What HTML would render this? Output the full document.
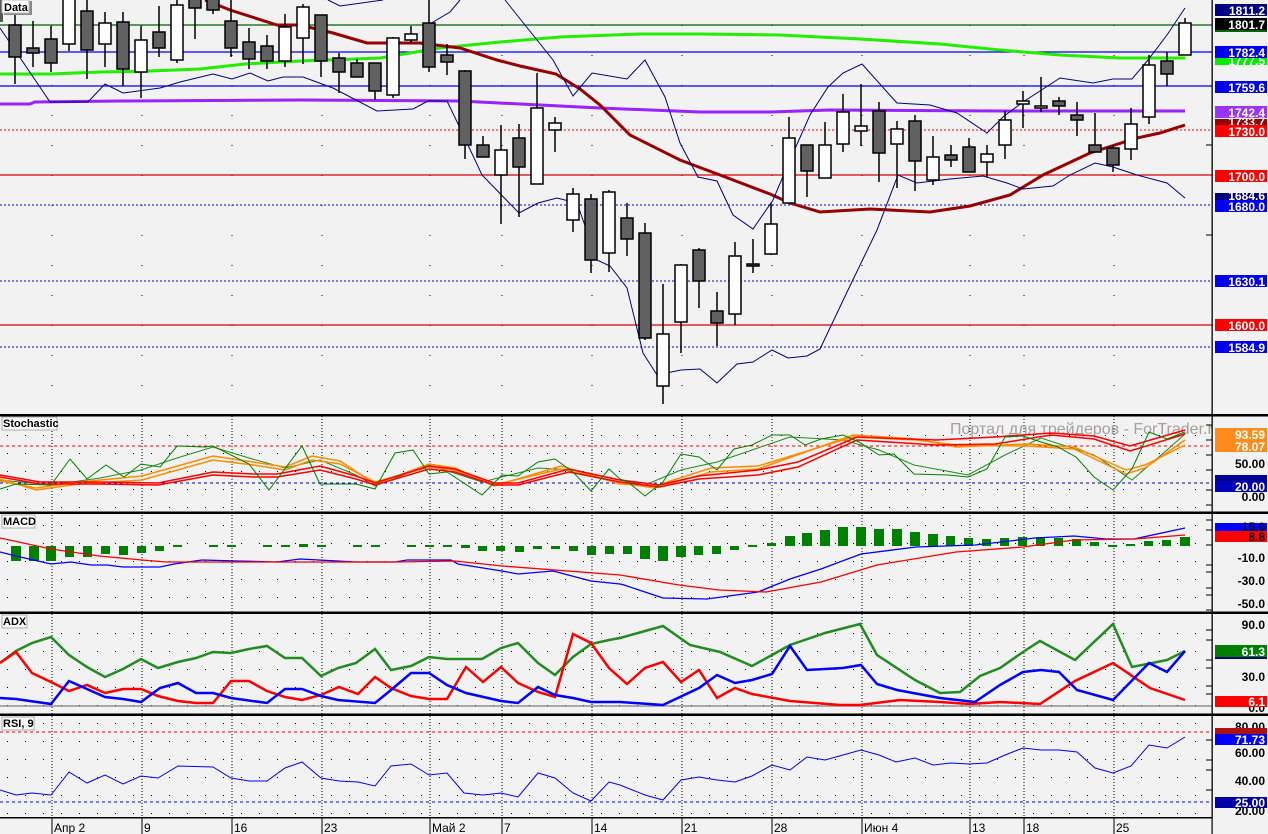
<!DOCTYPE html>
<html><head><meta charset="utf-8"><style>
html,body{margin:0;padding:0;background:#f2f2f2;}
svg{display:block;font-family:"Liberation Sans","DejaVu Sans",sans-serif;}
.lb{font-weight:bold;font-size:12px;text-anchor:end;}
.tt{font-weight:bold;font-size:11px;}
</style></head><body>
<svg width="1268" height="834" viewBox="0 0 1268 834" xmlns="http://www.w3.org/2000/svg">
<defs>
<pattern id="dg" x="7" y="3" width="18" height="18" patternUnits="userSpaceOnUse"><rect x="0" y="0" width="1" height="1" fill="#000"/></pattern>
<clipPath id="cp"><rect x="0" y="0" width="1212" height="818"/></clipPath>
</defs>
<rect x="0" y="0" width="1268" height="834" fill="#f2f2f2"/>
<!-- sub panel dot grids -->
<rect x="0" y="420" width="1210" height="90" fill="url(#dg)"/>
<rect x="0" y="517" width="1210" height="93" fill="url(#dg)"/>
<rect x="0" y="617" width="1210" height="94" fill="url(#dg)"/>
<rect x="0" y="719" width="1210" height="97" fill="url(#dg)"/>
<g clip-path="url(#cp)">
<!-- vertical date gridlines -->
<g stroke="#000" stroke-width="1" stroke-dasharray="1 29">
<path d="M52 25V415M142 25V415M232 25V415M322 25V415M430 25V415M502 25V415M592 25V415M682 25V415M772 25V415M862 25V415M970 25V415M1024 25V415M1114 25V415"/>
</g>
<g stroke="#000" stroke-width="1" stroke-dasharray="1 2">
<path d="M52 416V818M142 416V818M232 416V818M322 416V818M430 416V818M502 416V818M592 416V818M682 416V818M772 416V818M862 416V818M970 416V818M1024 416V818M1114 416V818"/>
</g>
<!-- horizontal levels main -->
<line x1="0" y1="25" x2="1212" y2="25" stroke="#006400" stroke-width="1.3"/>
<line x1="0" y1="52" x2="1212" y2="52" stroke="#0000ee" stroke-width="1.3"/>
<line x1="0" y1="86" x2="1212" y2="86" stroke="#0000ee" stroke-width="1.3"/>
<line x1="0" y1="130" x2="1212" y2="130" stroke="#ff0000" stroke-width="1" stroke-dasharray="2 2"/>
<line x1="0" y1="175" x2="1212" y2="175" stroke="#dd0000" stroke-width="1.3"/>
<line x1="0" y1="205" x2="1212" y2="205" stroke="#0000cc" stroke-width="1" stroke-dasharray="2 2"/>
<line x1="0" y1="281" x2="1212" y2="281" stroke="#0000cc" stroke-width="1" stroke-dasharray="2 2"/>
<line x1="0" y1="325" x2="1212" y2="325" stroke="#dd0000" stroke-width="1.3"/>
<line x1="0" y1="347" x2="1212" y2="347" stroke="#0000cc" stroke-width="1" stroke-dasharray="2 2"/>
<!-- MAs -->
<polyline fill="none" stroke="#22ee00" stroke-width="3" points="0,74 50,74 100,72 150,71 200,69 245,64 300,61 380,58 440,48 500,42 560,37 640,34 700,34 780,35 860,39 940,44 1000,50 1060,55 1120,58 1185,58"/>
<polyline fill="none" stroke="#9922ff" stroke-width="3" points="0,104 30,104 35,102 120,101 300,100 460,101 540,105 600,108 700,112 770,112 830,110 1000,111 1185,111"/>
<polyline fill="none" stroke="#990000" stroke-width="3" points="205,0 230,10 277,25 300,25 333,33 367,43 420,43 460,48 497,60 520,66 556,74 580,89 600,105 630,135 680,160 720,175 770,194 790,203 820,212 870,209 930,212 970,206 1010,195 1043,175 1090,153 1137,138 1160,133 1185,125"/>
<!-- Bollinger -->
<polyline fill="none" stroke="#000080" stroke-width="1" points="328,0 340,6 383,0"/>
<polyline fill="none" stroke="#000080" stroke-width="1" points="428,25 450,12 460,0"/>
<polyline fill="none" stroke="#000080" stroke-width="1" points="505,0 525,25 553,60 573,96 592,73 627,79 645,60 665,97 680,143 698,177 717,181 733,215 753,229 773,200 790,160 810,115 828,87 843,73 862,64 897,103 930,105 957,113 987,133 1003,117 1023,102 1060,78 1093,83 1113,79 1132,79 1148,60 1167,35 1185,8"/>
<polyline fill="none" stroke="#000080" stroke-width="1" points="0,28 50,102 88,102 105,84 123,93 160,88 180,82 213,74 232,79 250,73 268,81 283,77 303,77 333,88 377,111 413,109 428,101 447,101 460,128 482,175 519,213 538,203 557,198 577,203 597,260 610,266 627,288 643,353 657,375 681,370 700,369 717,383 737,364 753,362 772,350 788,358 807,356 820,349 848,290 877,230 898,175 917,183 950,179 983,176 1007,183 1023,189 1053,186 1070,175 1095,163 1113,167 1137,175 1167,183 1185,198"/>
<!-- candles -->
<path stroke="#000" stroke-width="1.5" fill="none" d="M15 15V84M33 21V67M51 26V72M69 0V51M87 0V79M105 12V67M123 12V86M141 26V98M159 6V57M177 0V63M195 0V39M213 0V14M231 0V57M249 28V69M267 35V69M285 14V67M303 4V64M321 15V77M339 53V93M357 59V77M375 63V100M393 37V98M411 26V43M429 0V72M447 44V75M465 70V159M483 136V157M501 125V224M519 124V217M537 73V184M555 117V152M573 188V232M591 194V273M609 190V272M627 203V256M645 223V340M663 284V404M681 264V353M699 248V308M717 292V346M735 242V325M753 239V273M771 203V255M789 117V203M807 145V197M825 122V178M843 94V152M861 84V146M879 102V182M897 121V188M915 115V191M933 136V185M951 145V167M969 138V172M987 145V177M1005 111V159M1023 91V128M1041 77V112M1059 97V115M1077 102V136M1095 113V152M1113 145V172M1131 108V160M1149 55V124M1167 52V86M1185 18V55"/>
<g stroke="#000" stroke-width="1.5" fill="#616161">
<rect x="9" y="25" width="12" height="32"/><rect x="27" y="48" width="12" height="5"/><rect x="45" y="39" width="12" height="24"/>
<rect x="81" y="11" width="12" height="39"/><rect x="117" y="22" width="12" height="47"/><rect x="153" y="32" width="12" height="16"/>
<rect x="189" y="-2" width="12" height="10"/><rect x="207" y="-2" width="12" height="12"/><rect x="225" y="21" width="12" height="27"/>
<rect x="243" y="42" width="12" height="17"/><rect x="261" y="46" width="12" height="15"/><rect x="315" y="15" width="12" height="46"/>
<rect x="333" y="58" width="12" height="14"/><rect x="351" y="63" width="12" height="14"/><rect x="369" y="63" width="12" height="28"/>
<rect x="423" y="23" width="12" height="44"/><rect x="441" y="55" width="12" height="7"/><rect x="459" y="71" width="12" height="74"/>
<rect x="477" y="145" width="12" height="12"/><rect x="513" y="138" width="12" height="29"/><rect x="585" y="199" width="12" height="61"/>
<rect x="621" y="218" width="12" height="21"/><rect x="639" y="233" width="12" height="105"/><rect x="693" y="250" width="12" height="31"/>
<rect x="711" y="311" width="12" height="12"/><rect x="747" y="264" width="12" height="2"/><rect x="801" y="145" width="12" height="26"/>
<rect x="873" y="111" width="12" height="42"/><rect x="909" y="121" width="12" height="40"/><rect x="945" y="155" width="12" height="5"/>
<rect x="963" y="147" width="12" height="25"/><rect x="1053" y="101" width="12" height="5"/><rect x="1071" y="115" width="12" height="5"/>
<rect x="1089" y="145" width="12" height="7"/><rect x="1107" y="148" width="12" height="17"/><rect x="1161" y="61" width="12" height="13"/>
</g>
<g stroke="#000" stroke-width="1.5" fill="#fff">
<rect x="63" y="-2" width="12" height="46"/><rect x="99" y="23" width="12" height="21"/><rect x="135" y="40" width="12" height="32"/>
<rect x="171" y="5" width="12" height="55"/><rect x="279" y="27" width="12" height="34"/><rect x="297" y="7" width="12" height="31"/>
<rect x="387" y="38" width="12" height="57"/><rect x="405" y="34" width="12" height="6"/><rect x="495" y="150" width="12" height="25"/>
<rect x="531" y="108" width="12" height="76"/><rect x="549" y="123" width="12" height="7"/><rect x="567" y="194" width="12" height="26"/>
<rect x="603" y="192" width="12" height="61"/><rect x="657" y="334" width="12" height="52"/><rect x="675" y="265" width="12" height="57"/>
<rect x="729" y="256" width="12" height="58"/><rect x="765" y="224" width="12" height="30"/><rect x="783" y="138" width="12" height="65"/>
<rect x="819" y="145" width="12" height="33"/><rect x="837" y="112" width="12" height="32"/><rect x="855" y="126" width="12" height="5"/>
<rect x="891" y="129" width="12" height="15"/><rect x="927" y="157" width="12" height="23"/><rect x="981" y="154" width="12" height="8"/>
<rect x="999" y="120" width="12" height="25"/><rect x="1017" y="101" width="12" height="3"/><rect x="1035" y="106" width="12" height="2"/>
<rect x="1125" y="124" width="12" height="25"/><rect x="1143" y="65" width="12" height="52"/><rect x="1179" y="23" width="12" height="32"/>
</g>

<!-- Stochastic -->
<text x="950" y="434" font-size="16" fill="#a89e9e">Портал для трейдеров - ForTrader.ru</text>
<line x1="0" y1="446" x2="1212" y2="446" stroke="#ff0000" stroke-dasharray="3 3"/>
<line x1="0" y1="483" x2="1212" y2="483" stroke="#0000aa" stroke-dasharray="3 3"/>
<polyline fill="none" stroke="#228b22" stroke-width="1" points="0,480 51,485 100,478 141,470 177,458 213,447 249,458 285,468 320,460 356,475 375,486 429,465 482,482 538,468 573,470 609,478 645,485 681,470 717,462 752,450 790,437 843,440 879,450 914,465 968,475 1005,455 1041,438 1094,455 1132,480 1167,450 1185,434"/>
<polyline fill="none" stroke="#ff8c00" stroke-width="1.5" points="0,481 36,488 79,482 142,476 213,456 253,462 285,467 312,456 340,461 375,484 429,464 455,468 494,486 561,466 620,484 655,486 711,468 758,466 853,437 916,440 956,445 1027,446 1074,449 1126,474 1145,468 1185,440"/>
<polyline fill="none" stroke="#ff8c00" stroke-width="1.5" points="0,479 36,490 79,484 142,480 213,460 253,465 285,470 312,460 340,464 375,482 429,467 455,470 494,485 561,469 620,483 655,488 711,472 758,469 853,435 916,439 956,447 1027,444 1074,447 1126,470 1145,465 1185,445"/>
<polyline fill="none" stroke="#ff0000" stroke-width="1.5" points="0,475 40,482 99,482 158,483 213,472 253,474 277,474 320,466 356,476 375,483 429,466 455,469 494,483 518,483 569,469 620,480 659,485 699,476 758,470 798,462 857,437 936,440 995,437 1051,433 1094,436 1130,446 1185,430"/>
<polyline fill="none" stroke="#ff0000" stroke-width="1.5" points="0,477 40,484 99,484 158,485 213,475 253,477 277,477 320,470 356,479 375,485 429,469 455,472 494,485 518,485 569,472 620,482 659,487 699,479 758,475 798,467 857,440 936,445 995,444 1051,435 1094,439 1130,451 1185,434"/>
<polyline fill="none" stroke="#008000" stroke-width="1" points="0,489 16,484 51,485 70,459 87,479 106,465 124,477 141,464 160,467 177,446 205,447 213,446 249,464 269,490 302,446 320,484 356,484 375,489 395,453 413,450 429,474 447,472 482,495 502,475 518,476 538,462 555,459 573,472 591,491 609,469 620,479 628,482 645,496 663,482 681,454 699,457 717,470 734,449 752,445 772,435 790,435 805,445 821,439 843,435 859,442 879,455 894,454 914,474 948,475 968,477 987,469 1005,437 1023,436 1041,442 1058,447 1076,457 1094,477 1113,490 1132,469 1149,432 1167,439 1185,432"/>

<!-- MACD -->
<g fill="#008000">
<rect x="11" y="546" width="10" height="15"/><rect x="29" y="546" width="10" height="15"/><rect x="46" y="546" width="10" height="15"/>
<rect x="65" y="546" width="9" height="11"/><rect x="83" y="546" width="9" height="11"/><rect x="101" y="546" width="9" height="8"/>
<rect x="119" y="546" width="9" height="9"/><rect x="137" y="546" width="9" height="7"/><rect x="155" y="546" width="9" height="5"/>
<rect x="173" y="545" width="9" height="2"/><rect x="209" y="545" width="9" height="2"/><rect x="227" y="545" width="9" height="2"/>
<rect x="263" y="545" width="9" height="2"/><rect x="281" y="545" width="9" height="2"/><rect x="299" y="544" width="9" height="3"/>
<rect x="317" y="545" width="9" height="2"/><rect x="353" y="545" width="9" height="2"/><rect x="371" y="545" width="9" height="2"/>
<rect x="407" y="545" width="9" height="2"/><rect x="425" y="545" width="9" height="2"/><rect x="443" y="545" width="9" height="2"/>
<rect x="461" y="545" width="9" height="3"/><rect x="478" y="546" width="9" height="5"/><rect x="496" y="546" width="9" height="5"/>
<rect x="515" y="546" width="9" height="6"/><rect x="533" y="546" width="9" height="3"/><rect x="551" y="546" width="9" height="3"/>
<rect x="569" y="546" width="9" height="5"/><rect x="587" y="546" width="9" height="9"/><rect x="605" y="546" width="9" height="8"/>
<rect x="623" y="546" width="9" height="8"/><rect x="640" y="546" width="10" height="13"/><rect x="658" y="546" width="10" height="15"/>
<rect x="676" y="546" width="10" height="11"/><rect x="694" y="546" width="9" height="9"/><rect x="712" y="546" width="9" height="8"/>
<rect x="730" y="546" width="9" height="4"/><rect x="748" y="545" width="9" height="2"/><rect x="767" y="543" width="9" height="3"/>
<rect x="785" y="536" width="10" height="10"/><rect x="802" y="533" width="10" height="13"/><rect x="820" y="530" width="10" height="16"/>
<rect x="838" y="527" width="10" height="19"/><rect x="856" y="527" width="10" height="19"/><rect x="874" y="529" width="10" height="17"/>
<rect x="892" y="529" width="10" height="17"/><rect x="910" y="532" width="10" height="14"/><rect x="928" y="534" width="10" height="12"/>
<rect x="946" y="536" width="9" height="10"/><rect x="964" y="538" width="9" height="8"/><rect x="982" y="539" width="9" height="7"/>
<rect x="1000" y="538" width="9" height="8"/><rect x="1018" y="537" width="9" height="9"/><rect x="1036" y="537" width="9" height="9"/>
<rect x="1054" y="538" width="9" height="8"/><rect x="1072" y="539" width="9" height="7"/><rect x="1090" y="542" width="9" height="4"/>
<rect x="1108" y="545" width="9" height="2"/><rect x="1126" y="544" width="9" height="2"/><rect x="1144" y="541" width="9" height="5"/>
<rect x="1162" y="540" width="9" height="6"/><rect x="1180" y="537" width="10" height="9"/>
</g>
<polyline fill="none" stroke="#0000ff" stroke-width="1.3" points="0,552 16,556 51,564 71,562 91,565 107,565 123,567 160,567 174,564 202,560 237,561 277,562 300,559 356,562 395,562 407,560 451,560 458,564 502,571 518,574 553,571 591,581 620,584 624,585 663,598 707,599 758,592 790,579 821,569 861,554 916,547 975,545 1035,538 1074,536 1106,539 1134,539 1185,528"/>
<polyline fill="none" stroke="#ff0000" stroke-width="1.3" points="0,538 51,549 99,556 142,560 166,562 221,562 395,562 455,561 502,566 620,575 679,585 719,590 766,592 821,582 877,565 956,552 1023,547 1074,540 1134,539 1185,535"/>

<!-- ADX -->
<line x1="0" y1="706" x2="1212" y2="706" stroke="#808080" stroke-width="1.3"/>
<polyline fill="none" stroke="#228b22" stroke-width="2.5" points="0,663 16,651 32,643 51,637 69,655 87,667 105,677 123,669 141,659 158,668 178,662 196,658 213,652 231,653 249,649 267,646 285,658 302,658 321,676 338,668 356,663 375,649 391,670 411,666 429,657 447,659 482,659 501,648 518,643 538,663 555,675 573,657 591,644 609,640 620,638 663,626 690,645 720,652 752,666 772,655 790,645 825,633 860,624 877,655 915,680 940,693 960,692 980,676 1000,668 1023,652 1040,641 1075,660 1113,624 1132,667 1167,660 1185,651"/>
<polyline fill="none" stroke="#ff0000" stroke-width="2.5" points="0,663 16,652 32,673 51,682 69,691 87,685 105,693 123,689 141,689 158,696 178,701 196,703 213,703 231,681 249,681 267,691 285,697 302,700 321,695 339,687 358,694 375,677 391,688 411,696 429,699 447,699 466,667 483,682 501,667 518,683 538,692 555,697 573,634 591,643 609,668 627,684 645,668 663,662 681,682 699,670 717,698 735,688 752,694 790,701 840,705 860,705 900,700 940,702 970,704 1000,702 1040,704 1075,681 1113,663 1150,688 1185,700"/>
<polyline fill="none" stroke="#0000ff" stroke-width="2.5" points="0,698 16,699 51,704 69,681 87,689 105,697 123,699 141,702 160,688 178,683 196,693 213,693 231,698 267,703 285,689 302,689 321,696 338,700 375,703 391,690 411,673 429,673 447,685 466,693 501,701 518,703 538,687 555,695 573,698 591,702 620,702 663,705 699,688 717,675 735,683 752,680 772,674 790,646 807,670 843,668 861,665 877,684 897,690 940,698 975,702 1000,685 1023,672 1041,670 1059,672 1077,690 1113,700 1149,663 1167,672 1185,651"/>

<!-- RSI -->
<line x1="0" y1="732" x2="1212" y2="732" stroke="#ff0000" stroke-dasharray="3 3"/>
<line x1="0" y1="802" x2="1212" y2="802" stroke="#0000ff" stroke-dasharray="3 3"/>
<polyline fill="none" stroke="#0000ff" stroke-width="1" points="0,790 16,795 32,793 51,795 69,772 87,783 105,775 123,784 141,776 158,778 178,766 213,767 231,778 249,781 267,781 285,768 302,762 321,778 339,781 358,782 375,786 391,766 411,764 429,775 447,773 464,793 483,795 501,793 518,797 538,773 555,778 573,793 591,801 609,782 620,785 645,795 663,800 681,780 699,777 717,780 735,782 752,776 772,765 790,770 807,757 825,760 843,755 861,750 879,755 896,762 915,758 933,765 951,763 969,764 987,763 1005,755 1023,748 1041,750 1059,750 1077,752 1095,768 1113,773 1131,766 1149,745 1167,748 1185,737"/>
</g>

<!-- panel separators -->
<g fill="#000">
<rect x="0" y="414" width="1268" height="2.5"/>
<rect x="0" y="511.5" width="1268" height="2.5"/>
<rect x="0" y="611.5" width="1268" height="2.5"/>
<rect x="0" y="713.5" width="1268" height="2.5"/>
<rect x="0" y="817" width="1212" height="1.5"/>
<rect x="1211.5" y="0" width="1.3" height="834"/>
<rect x="0" y="0" width="3" height="22" fill="#555"/>
</g>
<!-- axis ticks -->
<path stroke="#000" stroke-width="1" d="M1206 145H1212M1206 235H1212M1206 425H1212M1206 440H1212M1206 455H1212M1206 470H1212M1206 490H1212M1206 505H1212M1206 520H1212M1206 530H1212M1206 545H1212M1206 565H1212M1206 572H1212M1206 588H1212M1206 595H1212M1206 610H1212M1206 630H1212M1206 640H1212M1206 660H1212M1206 668H1212M1206 686H1212M1206 694H1212M1206 740H1212M1206 760H1212M1206 770H1212M1206 790H1212"/>

<!-- titles -->
<g class="tt">
<rect x="4" y="1" width="28" height="14" fill="#888"/><rect x="2" y="0" width="27" height="13" fill="#fff" stroke="#bbb"/><text x="4" y="11">Data</text>
<rect x="2" y="417" width="55" height="13" fill="#fff" stroke="#aaa"/><text x="3" y="427">Stochastic</text>
<rect x="2" y="515" width="33" height="13" fill="#fff" stroke="#aaa"/><text x="3" y="525">MACD</text>
<rect x="2" y="615" width="25" height="13" fill="#fff" stroke="#aaa"/><text x="3" y="625">ADX</text>
<rect x="2" y="717" width="32" height="13" fill="#fff" stroke="#aaa"/><text x="3" y="727">RSI, 9</text>
</g>

<!-- right axis labels -->
<g class="lb">
<rect x="1215" y="4" width="52" height="12" fill="#000080"/><text x="1265" y="15" fill="#fff">1811.2</text>
<rect x="1215" y="18" width="52" height="12" fill="#000"/><text x="1265" y="29" fill="#fff">1801.7</text>
<rect x="1215" y="30" width="52" height="2" fill="#006400"/>
<rect x="1215" y="58" width="52" height="7" fill="#00ee00"/><text x="1265" y="65" fill="#fff">1777.5</text>
<rect x="1215" y="46" width="52" height="12" fill="#0000ee"/><text x="1265" y="57" fill="#fff">1782.4</text>
<rect x="1215" y="81" width="52" height="12" fill="#0000ee"/><text x="1265" y="92" fill="#fff">1759.6</text>
<rect x="1215" y="106" width="52" height="12" fill="#9933ff"/><text x="1265" y="117" fill="#fff">1742.4</text>
<rect x="1215" y="119" width="52" height="6" fill="#990000"/><text x="1265" y="126" fill="#fff">1733.7</text>
<rect x="1215" y="125" width="52" height="12" fill="#ff0000"/><text x="1265" y="136" fill="#fff">1730.0</text>
<rect x="1215" y="170" width="52" height="12" fill="#ff0000"/><text x="1265" y="181" fill="#fff">1700.0</text>
<rect x="1215" y="193" width="52" height="7" fill="#000080"/><text x="1265" y="200" fill="#fff">1684.6</text>
<rect x="1215" y="200" width="52" height="12" fill="#0000ee"/><text x="1265" y="211" fill="#fff">1680.0</text>
<rect x="1215" y="275" width="52" height="12" fill="#0000ee"/><text x="1265" y="286" fill="#fff">1630.1</text>
<rect x="1215" y="319" width="52" height="12" fill="#ff0000"/><text x="1265" y="330" fill="#fff">1600.0</text>
<rect x="1215" y="341" width="52" height="12" fill="#0000ee"/><text x="1265" y="352" fill="#fff">1584.9</text>

<rect x="1215" y="428" width="52" height="12" fill="#ff8c1a"/><text x="1265" y="439" fill="#fff">93.59</text>
<rect x="1215" y="440" width="52" height="12" fill="#ff8c1a"/><text x="1265" y="451" fill="#fff">78.07</text>
<text x="1265" y="468" fill="#000">50.00</text>
<rect x="1215" y="475" width="52" height="6" fill="#000099"/>
<rect x="1215" y="481" width="52" height="11" fill="#0000bb"/><text x="1265" y="491" fill="#fff">20.00</text>
<text x="1265" y="501" fill="#000">0.00</text>

<rect x="1215" y="523" width="52" height="8" fill="#0000ff"/><text x="1265" y="531" fill="#000">15.0</text>
<rect x="1215" y="531" width="52" height="11" fill="#ff0000"/><text x="1265" y="541" fill="#000">8.8</text>
<text x="1265" y="562" fill="#000">-10.0</text>
<text x="1265" y="585" fill="#000">-30.0</text>
<text x="1265" y="608" fill="#000">-50.0</text>

<text x="1265" y="629" fill="#000">90.0</text>
<rect x="1215" y="645" width="52" height="12" fill="#008000"/><text x="1265" y="656" fill="#fff">61.3</text>
<rect x="1215" y="657" width="52" height="2" fill="#000080"/>
<text x="1265" y="681" fill="#000">30.0</text>
<text x="1265" y="712" fill="#000">0.0</text>
<rect x="1215" y="696" width="52" height="11" fill="#ff0000"/><text x="1265" y="706" fill="#fff">6.1</text>

<text x="1265" y="731" fill="#000">80.00</text>
<rect x="1215" y="728" width="52" height="6" fill="#aa1111"/>
<rect x="1215" y="734" width="52" height="11" fill="#0000ff"/><text x="1265" y="744" fill="#fff">71.73</text>
<text x="1265" y="757" fill="#000">60.00</text>
<text x="1265" y="785" fill="#000">40.00</text>
<text x="1265" y="815" fill="#000">20.00</text>
<rect x="1215" y="797" width="52" height="11" fill="#0000aa"/><text x="1265" y="807" fill="#fff">25.00</text>
</g>
<rect x="1212.8" y="818" width="56" height="16" fill="#f2f2f2"/>

<!-- date axis -->
<path stroke="#000" stroke-width="1" d="M52 818V834M142 818V834M232 818V834M322 818V834M430 818V834M502 818V834M592 818V834M682 818V834M772 818V834M862 818V834M970 818V834M1024 818V834M1114 818V834"/>
<g font-size="12" fill="#000">
<text x="54" y="832">Апр 2</text><text x="144" y="832">9</text><text x="234" y="832">16</text><text x="324" y="832">23</text>
<text x="432" y="832">Май 2</text><text x="504" y="832">7</text><text x="594" y="832">14</text><text x="684" y="832">21</text>
<text x="774" y="832">28</text><text x="864" y="832">Июн 4</text><text x="972" y="832">13</text><text x="1026" y="832">18</text><text x="1116" y="832">25</text>
</g>
</svg>
</body></html>
